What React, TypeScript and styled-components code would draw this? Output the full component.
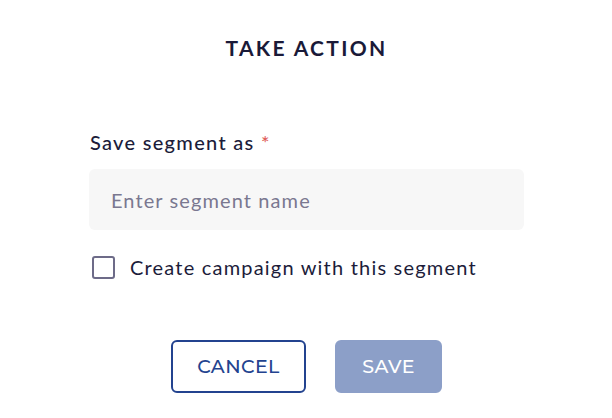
import styled, { createGlobalStyle } from "styled-components";

const Global = createGlobalStyle`
  html, body {
    margin: 0;
    padding: 0;
    background: #ffffff;
  }
  * {
    box-sizing: border-box;
  }
`;

export default function App() {
  return (
    <>
      <Global />
      <Modal>
        <Title>TAKE ACTION</Title>
        <Form>
          <Field>
            <Label htmlFor="segment">
              Save segment as <Required>*</Required>
            </Label>
            <Input id="segment" type="text" placeholder="Enter segment name" />
          </Field>
          <CheckRow>
            <Box type="checkbox" />
            <CheckText>Create campaign with this segment</CheckText>
          </CheckRow>
        </Form>
        <Actions>
          <Button>CANCEL</Button>
          <Button $primary>SAVE</Button>
        </Actions>
      </Modal>
    </>
  );
}

const Modal = styled.div`
  width: 612px;
  height: 418px;
  background: #fff;
  display: flex;
  flex-direction: column;
  padding: 35px 88px 0 89px;
  font-family: "Lato", "Open Sans", sans-serif;
  color: #1c1c3a;
`;
const Title = styled.h1`
  margin: 0;
  text-align: center;
  font-size: 21px;
  font-weight: 700;
  letter-spacing: 2.3px;
  line-height: 26px;
  color: #1a1a38;
`;
const Form = styled.div`
  display: flex;
  flex-direction: column;
  margin-top: 68px;
  gap: 24px;
`;
const Field = styled.div`
  display: flex;
  flex-direction: column;
  gap: 14px;
`;
const Label = styled.label`
  font-size: 20px;
  line-height: 26px;
  font-weight: 500;
  padding-left: 1px;
  letter-spacing: 1.3px;
`;
const Required = styled.span`
  color: #e0605c;
`;
const Input = styled.input`
  width: 100%;
  height: 61px;
  border: none;
  outline: none;
  border-radius: 6px;
  background: #f7f7f7;
  padding: 0 22px;
  font-family: inherit;
  font-size: 20px;
  color: #1c1c3a;
  letter-spacing: 1.1px;
  &::placeholder {
    color: #7a7890;
  }
`;
const CheckRow = styled.label`
  display: flex;
  align-items: center;
  gap: 15px;
  padding-left: 3px;
`;
const Box = styled.input`
  appearance: none;
  margin: 0;
  width: 23px;
  height: 23px;
  border: 2px solid #6d6b88;
  border-radius: 3px;
  background: #fff;
`;
const CheckText = styled.span`
  font-size: 20px;
  line-height: 26px;
  letter-spacing: 1.2px;
`;
const Actions = styled.div`
  display: flex;
  justify-content: center;
  gap: 29px;
  margin-top: 60px;
`;
const Button = styled.button<{ $primary?: boolean }>`
  height: 53px;
  padding: 0;
  border-radius: 6px;
  font-family: "Montserrat", "Lato", sans-serif;
  font-size: 19px;
  font-weight: 500;
  letter-spacing: 0.4px;
  border: 2px solid ${(p) => (p.$primary ? "#8c9fc8" : "#23438f")};
  background: ${(p) => (p.$primary ? "#8c9fc8" : "#fff")};
  color: ${(p) => (p.$primary ? "#fff" : "#23438f")};
  width: ${(p) => (p.$primary ? "107px" : "135px")};
`;
